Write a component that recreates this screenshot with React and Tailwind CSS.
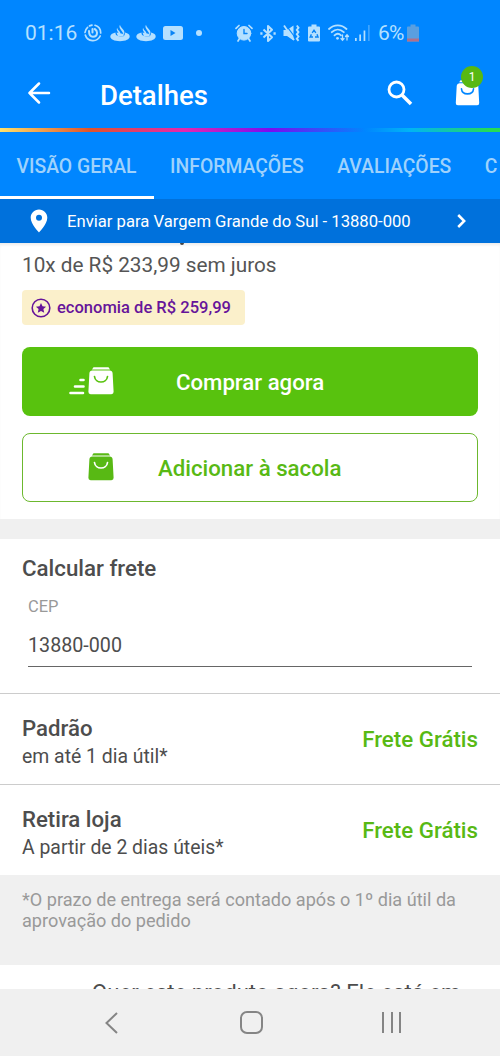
const tabs = ['VISÃO GERAL', 'INFORMAÇÕES', 'AVALIAÇÕES', 'C'];

const shippingOptions = [
  { name: 'Padrão', deadline: 'em até 1 dia útil*', price: 'Frete Grátis' },
  { name: 'Retira loja', deadline: 'A partir de 2 dias úteis*', price: 'Frete Grátis' },
];

// --- Icons ---
const BagIcon = ({ className, smile }) => (
  <svg className={className} viewBox="0 0 26 28" fill="currentColor">
    <path d="M5.500.3h15l1.500 2.200H4z" />
    <path d="M4.300 3.600h17.400q2.600 0 2.900 2.700l1 18.500q.1 2.400-2.200 2.400H2.600q-2.300 0-2.200-2.400l1-18.500q.3-2.700 2.900-2.700z" />
    <path d="M6.500 9.500c.8 7.300 12.200 7.300 13 0" fill="none" className={smile} strokeWidth="1.700" strokeLinecap="round" />
  </svg>
);

const FlameIcon = () => (
  <svg className="h-[18px] w-5" viewBox="0 0 20 18" fill="currentColor">
    <path d="M5.500 8.500C2.300 9.200.300 10.500.300 12.500c0 2.700 4 4.700 9.700 4.700s9.700-2 9.700-4.700c0-1.900-1.700-3.100-4.600-3.900.1 1.500-.6 2.800-1.400 3.600-2 .5-5.500.3-7.200-1-.8-.7-1.100-1.600-1-2.700z" />
    <path d="M10 .8c-.8 1.300-.7 2.700.3 4.200l2.400 3.600c.5.800.8 1.500.8 2.300 1.300-1.600 1.200-3.200.2-4.700L11 3C10.400 2.200 10 1.500 10 .8zM7.200 3.800c-.7 1.200-.5 2.300.3 3.500l2.400 4.200c.7-1.300.6-2.600-.1-3.700L7.800 5.500c-.4-.6-.6-1.100-.6-1.700z" />
    <path d="M6.500 8.500l7 1.500.2 2.500H8z" />
  </svg>
);

const StatusBar = () => (
  <div className="flex h-[66px] items-center pl-[25px] text-[#b5e0ff]">
    <span className="w-[59px] text-[21px] leading-none">01:16</span>
    <svg className="h-[18px] w-[18px]" viewBox="0 0 18 18" fill="none" stroke="currentColor" strokeWidth="1.700" strokeLinecap="round">
      <path d="M11 1.300A8 8 0 0 1 16.700 9M16.200 12A8 8 0 0 1 1.300 11M1 8.500A8 8 0 0 1 3.600 3.300M5.500 1.900 8 1.100" />
      <path d="M5 7c0 3.500 1.500 5.700 4 5.700s4-1.700 4-4c0-1.700-1-3-2.300-3.700M8.500 5v3.500" strokeWidth="2" />
    </svg>
    <span className="ml-2"><FlameIcon /></span>
    <span className="ml-[6px]"><FlameIcon /></span>
    <svg className="ml-[7px] h-[14px] w-5" viewBox="0 0 20 14">
      <rect width="20" height="14" rx="2.500" fill="currentColor" />
      <path d="M7.500 4v6l5-3z" fill="#0a84f5" />
    </svg>
    <span className="ml-[13px] h-[6px] w-[6px] rounded-full bg-current" />

    <svg className="ml-[33px] h-[18px] w-[18px]" viewBox="0 0 18 18" stroke="currentColor" strokeLinecap="round" fill="none">
      <circle cx="9" cy="9.300" r="6.800" fill="currentColor" />
      <path d="M1 4.300 4 1.500M17 4.300 14 1.500M4.500 14.500 3 17M13.500 14.500l1.500 2.500" strokeWidth="1.700" />
      <path d="M9 5.500v4h3" stroke="#0a84f5" strokeWidth="1.400" />
    </svg>
    <svg className="ml-[7px] h-[19px] w-4" viewBox="0 0 16 19" fill="none" stroke="currentColor" strokeWidth="2" strokeLinejoin="round">
      <path d="M3.500 5.500 12 13.200 8 17V2l4 3.800-8.500 7.700" />
      <path d="M.3 9.500h2.200M13.500 9.500h2.200" strokeWidth="2.400" />
    </svg>
    <svg className="ml-[7px] h-[18px] w-[17px]" viewBox="0 0 17 18" fill="none" stroke="currentColor">
      <path d="M.5 6h3.500L10.500 1.500v15L4 12H.5z" fill="currentColor" stroke="none" />
      <path d="M2.500.5 12.500 14" stroke="#0086ff" strokeWidth="1.200" />
      <path d="M1 1.500 11 16" strokeWidth="1.800" />
      <path d="M13.800 1.500l1.700 2.200-1.700 2.200 1.700 2.200-1.700 2.200 1.700 2.200-1.700 2.200 1.700 2.200" strokeWidth="1.900" />
    </svg>
    <svg className="ml-2 h-[18px] w-3" viewBox="0 0 12 18">
      <path d="M3.500.5h5V2.500H11q1 0 1 1V16.500q0 1-1 1H1q-1 0-1-1V3.500q0-1 1-1h2.500z" fill="currentColor" />
      <path d="M4.200 8.800 6 6.200l1.800 2.600M9 10.300l1 2.700H7M5 13H2.200l1.200-2.600" fill="none" stroke="#0a84f5" strokeWidth="1.400" />
    </svg>
    <svg className="ml-2 h-[18px] w-[22px]" viewBox="0 0 22 18" fill="none" stroke="currentColor" strokeWidth="1.800" strokeLinecap="round">
      <path d="M1 5C6 .2 13.500.2 18.500 5M3.800 8.200c3.600-3.500 8.400-3.500 12 0M6.500 11.300c2-1.900 4.600-1.900 6.500 0" />
      <circle cx="9.500" cy="14.300" r="1.400" fill="currentColor" stroke="none" />
      <path d="M14.500 11v4.500M13 14.500l1.500 1.700 1.500-1.700M19 16v-4.500M17.500 12.500l1.500-1.700 1.500 1.700" strokeWidth="1.300" />
    </svg>
    <svg className="ml-[5px] h-4 w-[15px]" viewBox="0 0 15 16" fill="currentColor">
      <path d="M0 13h1.700v3H0zM4.300 9.500H6V16H4.300zM8.600 5.500h1.700V16H8.600z" />
      <path d="M13 0h1.700v16H13z" opacity=".35" />
    </svg>
    <span className="ml-[8px] w-[28px] text-[21px] leading-none tracking-[-0.8px]">6%</span>
    <svg className="ml-px h-[18px] w-3" viewBox="0 0 12 18">
      <path d="M3.500.5h5V2.500H11q1 0 1 1V17.500H0V3.500q0-1 1-1h2.500z" fill="#5a9fe0" />
      <path d="M0 14.500h12v3H0z" fill="#b0708a" />
    </svg>
  </div>
);

const Header = () => (
  <header className="h-[128px] bg-[#0086ff] text-white">
    <StatusBar />
    <div className="flex h-[56px] items-center pl-[28px]">
      <svg className="-mt-[2px] h-[22px] w-[23px]" viewBox="0 0 23 22" fill="none" stroke="currentColor" strokeWidth="2.500" strokeLinecap="round" strokeLinejoin="round">
        <path d="M11 1.500 1.500 11l9.500 9.500M1.500 11H21" />
      </svg>
      <h1 className="ml-[49px] w-[287px] pt-[3px] text-[27.500px] font-medium leading-none">Detalhes</h1>
      <svg className="-mt-[2px] h-[26px] w-[26px]" viewBox="0 0 26 26" fill="none" stroke="currentColor">
        <circle cx="9.500" cy="9.500" r="7.500" strokeWidth="2.800" />
        <path d="M15 15l9 9" strokeWidth="3.500" />
      </svg>
      <div className="relative -mt-[2px] ml-[42px]">
        <BagIcon className="h-[26px] w-[25px]" smile="stroke-[#0086ff]" />
        <span className="absolute -top-[14px] left-[6px] flex h-[22px] w-[22px] items-center justify-center rounded-full bg-[#58b812] text-[12px]">1</span>
      </div>
    </div>
  </header>
);

const Tabs = () => (
  <nav className="flex h-[67px] overflow-hidden bg-[#0086ff] text-[19.350px] font-medium text-[#9fd2fc]">
    {tabs.map((tab, i) => (
      <div key={tab} className={`flex shrink-0 items-center border-b-[3px] pl-[16.500px] pr-[17px] pt-[6px] ${i === 0 ? 'border-white' : 'border-transparent'}`}>
        {tab}
      </div>
    ))}
  </nav>
);

const AddressBar = () => (
  <div className="flex h-[44px] items-center bg-[#0071dc] pl-[30px] text-white">
    <svg className="h-6 w-[18px]" viewBox="0 0 18 24" fill="currentColor">
      <path fillRule="evenodd" d="M9 .5C4.200.5.700 4.200.700 8.800.700 15 9 23.500 9 23.500s8.300-8.500 8.300-14.700C17.300 4.200 13.800.5 9 .5zM9 5.800a3 3 0 1 1 0 6 3 3 0 0 1 0-6z" />
    </svg>
    <span className="ml-[19px] w-[390px] pt-[2px] text-[16.650px]">Enviar para Vargem Grande do Sul - 13880-000</span>
    <svg className="h-[14px] w-[9px]" viewBox="0 0 9 14" fill="none" stroke="currentColor" strokeWidth="2.500">
      <path d="M1.200 1l6 6-6 6" />
    </svg>
  </div>
);

const BuyBox = () => (
  <section className="flex h-[276px] flex-col items-start overflow-hidden px-[22px] shadow-[inset_0_3px_3px_-1px_rgba(0,0,0,0.08)]">
    <div className="ml-[158px] h-[2px] w-[4px] shrink-0 rounded-b-full bg-[#444]" />
    <p className="mt-[5px] text-[20.750px] leading-[30px] text-[#555]">10x de R$ 233,99 sem juros</p>
    <div className="mt-[10px] flex h-[35px] w-[223px] shrink-0 items-center rounded bg-[#fbf0cb] pl-[9px] text-[#66149a]">
      <svg className="h-5 w-5" viewBox="0 0 20 20">
        <circle cx="10" cy="10" r="8.800" fill="none" stroke="currentColor" strokeWidth="1.600" />
        <path d="M10 5l1.500 3.300 3.600.4-2.700 2.400.8 3.600-3.200-1.800-3.200 1.800.8-3.600-2.700-2.400 3.600-.4z" fill="currentColor" />
      </svg>
      <span className="ml-[6px] pt-px text-[16.550px] font-medium">economia de R$ 259,99</span>
    </div>
    <button className="mt-[22px] flex h-[69px] w-full shrink-0 items-center rounded-lg bg-[#58c20e] pl-[46px] text-white">
      <svg className="mb-[21px] h-[18px] w-[18px] self-end" viewBox="0 0 18 18" fill="none" stroke="currentColor" strokeWidth="2.600" strokeLinecap="round">
        <path d="M12.500 3h3M7 9.500h8.500M2.500 16h12.500" />
      </svg>
      <BagIcon className="mb-px ml-[2px] h-7 w-[26px]" smile="stroke-[#58c20e]" />
      <span className="ml-[62px] pt-[2px] text-[22.200px] font-medium">Comprar agora</span>
    </button>
    <button className="mt-[17px] flex h-[69px] w-full shrink-0 items-center rounded-lg border-[1.500px] border-[#6cb82e] pl-[65px] text-[#58b914]">
      <BagIcon className="mb-[2px] h-7 w-[26px]" smile="stroke-white" />
      <span className="ml-[44px] pt-[2px] text-[22.250px] font-medium">Adicionar à sacola</span>
    </button>
  </section>
);

const Shipping = () => (
  <section className="text-[#4d4d4d]">
    <div className="h-[155px] border-b border-[#ccc] px-[22px] pt-[14px]">
      <h2 className="text-[22.300px] font-medium leading-[30px]">Calcular frete</h2>
      <div className="mx-[6px] flex h-[84px] flex-col border-b border-[#666]">
        <label className="mt-[12px] text-[16.500px] leading-6 text-[#999]">CEP</label>
        <span className="mt-[12px] text-[19.700px] leading-[30px]">13880-000</span>
      </div>
    </div>
    {shippingOptions.map((option, i) => (
      <div key={option.name} className={`flex items-center justify-between px-[22px] ${i === 0 ? 'h-[91px] border-b border-[#ccc]' : 'h-[90px]'}`}>
        <div className="pt-[7px]">
          <h3 className="text-[22.200px] font-medium leading-[29px]">{option.name}</h3>
          <p className="text-[19.400px] leading-[28px]">{option.deadline}</p>
        </div>
        <span className="pt-px text-[22.300px] font-medium text-[#58b914]">{option.price}</span>
      </div>
    ))}
    <p className="h-[90px] bg-[#f0f0f0] pl-[22px] pt-[14px] text-[18.120px] leading-[21px] text-[#999]">
      *O prazo de entrega será contado após o 1º dia útil da<br />aprovação do pedido
    </p>
  </section>
);

const NavigationBar = () => (
  <footer className="flex h-[67px] items-center bg-[#f0f0f0] pl-[105px] text-[#858585]">
    <svg className="h-[22px] w-[13px]" viewBox="0 0 13 22" fill="none" stroke="currentColor" strokeWidth="2">
      <path d="M12 1 1.500 11 12 21" />
    </svg>
    <span className="ml-[122px] h-[23px] w-[23px] rounded-[7px] border-2 border-current" />
    <span className="ml-[119px] flex gap-[6.500px]">
      <span className="h-[21px] w-[2px] bg-current" />
      <span className="h-[21px] w-[2px] bg-current" />
      <span className="h-[21px] w-[2px] bg-current" />
    </span>
  </footer>
);

function App() {
  return (
    <div className="h-[1056px] w-[500px] overflow-hidden bg-white font-['Roboto',sans-serif]">
      <Header />
      <div className="h-1 bg-[linear-gradient(90deg,#ffe16b_0%,#e0532a_18%,#e626b0_37%,#7a0cf0_54%,#0086ff_73%,#00b4f5_82%,#25dc55_98%)]" />
      <Tabs />
      <AddressBar />
      <main>
        <BuyBox />
        <div className="h-5 bg-[#f0f0f0]" />
        <Shipping />
        <div className="h-6 overflow-hidden pl-[92px] pt-[12px] text-[22.150px] leading-[30px] text-[#4d4d4d]">
          <p className="whitespace-nowrap">Quer este produto agora? Ele está em</p>
        </div>
      </main>
      <NavigationBar />
    </div>
  );
}

export default App;
